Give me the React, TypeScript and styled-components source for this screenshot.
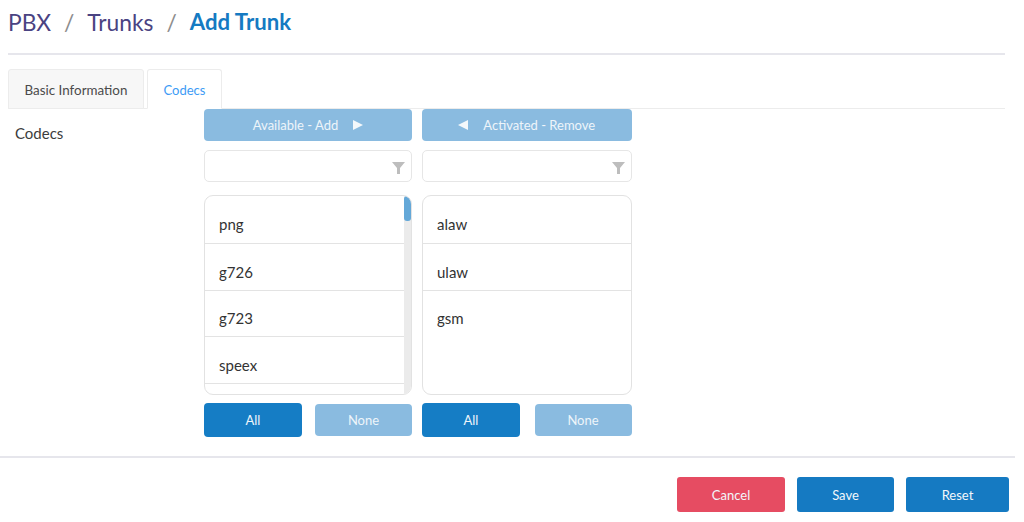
import React from "react";
import styled, { createGlobalStyle } from "styled-components";

const Global = createGlobalStyle`
  html, body { margin: 0; padding: 0; background: #fff; }
  body { font-family: "Lato", "Liberation Sans", sans-serif; width: 1024px; height: 522px; overflow: hidden; }
`;
const Page = styled.div`width: 1015px; display: flex; flex-direction: column;`;
const Header = styled.header`
  margin: 0 10px 0 8px; height: 46px; padding-top: 7px;
  border-bottom: 2px solid #e6e6ec; display: flex; align-items: flex-start;
`;
const Crumbs = styled.div`display: flex; font-size: 22.8px; line-height: 30px; color: #4a4382;`;
const Sep = styled.span`color: #8d8d8d; margin: 0 13px;`;
const Current = styled.span`color: #157ac2; font-weight: 700; font-size: 22.2px;`;
const Tabs = styled.nav`
  margin: 14px 10px 0 8px; height: 39px; display: flex; gap: 3px; border-bottom: 1px solid #ececec;
`;
const Tab = styled.div<{ $active?: boolean }>`
  box-sizing: border-box; height: 40px; padding-top: 1px; display: flex; align-items: center; justify-content: center;
  width: ${(p) => (p.$active ? "75px" : "136px")};
  font-size: ${(p) => (p.$active ? "13px" : "13.4px")}; color: ${(p) => (p.$active ? "#3d9bf5" : "#4b4b4b")};
  background: ${(p) => (p.$active ? "#fff" : "#f7f7f7")};
  border: 1px solid #ececec; border-bottom-color: ${(p) => (p.$active ? "#fff" : "#ececec")};
  border-radius: 3px 3px 0 0;
`;
const Content = styled.main`display: flex; height: 347px; margin-left: 15px;`;
const Label = styled.div`width: 189px; padding-top: 14px; font-size: 15px; line-height: 20px; color: #3c3c3c;`;
const Column = styled.section<{ $wide?: boolean }>`
  width: ${(p) => (p.$wide ? "209.5px" : "208px")}; margin-right: 10px; display: flex; flex-direction: column;
`;
const Action = styled.button`
  height: 32px; width: 100%; border: 0; border-radius: 4px; background: #8abbe0; color: #eef5fa;
  font: 13px "Lato", sans-serif; display: flex; align-items: center; justify-content: center; gap: 15px; padding: 0;
`;
const Filter = styled.div`
  margin-top: 9px; height: 32px; box-sizing: border-box; border: 1px solid #e6e6e6; border-radius: 5px;
  display: flex; align-items: center; justify-content: flex-end; padding: 3px 6px 0 0;
`;
const List = styled.div`
  margin-top: 13px; height: 200px; box-sizing: border-box; border: 1px solid #e2e2e2; border-radius: 9px;
  overflow: hidden; position: relative;
`;
const Row = styled.div<{ $last?: boolean }>`
  height: 47px; box-sizing: border-box; padding: 17.5px 0 0 14px; font-size: 15px; line-height: 20px; color: #333;
  border-bottom: ${(p) => (p.$last ? "0" : "1px solid #e3e3e3")};
  &:first-child { height: 48px; padding-top: 18px; }
  &:nth-child(3) { height: 46px; padding-top: 17px; }
`;
const Track = styled.div`
  position: absolute; top: 0; right: 0; bottom: 0; width: 7px; background: #ebebeb;
`;
const Thumb = styled.div`width: 7px; height: 25px; border-radius: 3px; background: #64a8d8;`;
const Pair = styled.div`margin-top: 8px; display: flex; justify-content: space-between; align-items: center;`;
const Small = styled.button<{ $on?: boolean }>`
  box-sizing: border-box; padding: 0; border: 0; border-radius: 4px; color: #eef5fa; font: 13px "Lato", sans-serif;
  width: ${(p) => (p.$on ? "98px" : "97px")}; height: ${(p) => (p.$on ? "34px" : "32px")};
  background: ${(p) => (p.$on ? "#157dc5" : "#8abbe0")};
`;
const Footer = styled.footer`
  border-top: 2px solid #e6e6ec; box-sizing: border-box; height: 66px; padding: 19px 6px 0 0;
  display: flex; justify-content: flex-end; gap: 12px;
`;
const FootBtn = styled.button<{ $w: number; $danger?: boolean }>`
  width: ${(p) => p.$w}px; height: 35px; border: 0; border-radius: 3px; padding: 0; color: #f2f7fb;
  font: 13px "Lato", sans-serif; background: ${(p) => (p.$danger ? "#e64c62" : "#157ac2")};
`;

const FilterIcon = () => (
  <svg width="13" height="12" viewBox="0 0 13 12"><path d="M0 0h13L8 6v6H5V6z" fill="#bdbdbd" /></svg>
);
const Tri = ({ left }: { left?: boolean }) => (
  <svg width="10" height="10" viewBox="0 0 10 10">
    <path d={left ? "M10 0v10L0 5z" : "M0 0v10l10-5z"} fill="#f4f8fb" />
  </svg>
);

export default function App() {
  return (
    <Page>
      <Global />
      <Header>
        <Crumbs>PBX<Sep>/</Sep>Trunks<Sep>/</Sep><Current>Add Trunk</Current></Crumbs>
      </Header>
      <Tabs>
        <Tab>Basic Information</Tab>
        <Tab $active>Codecs</Tab>
      </Tabs>
      <Content>
        <Label>Codecs</Label>
        <Column>
          <Action>Available - Add <Tri /></Action>
          <Filter><FilterIcon /></Filter>
          <List>
            <Row>png</Row><Row>g726</Row><Row>g723</Row><Row>speex</Row>
            <Track><Thumb /></Track>
          </List>
          <Pair><Small $on>All</Small><Small>None</Small></Pair>
        </Column>
        <Column $wide>
          <Action><Tri left /> Activated - Remove</Action>
          <Filter><FilterIcon /></Filter>
          <List>
            <Row>alaw</Row><Row>ulaw</Row><Row $last>gsm</Row>
          </List>
          <Pair><Small $on>All</Small><Small>None</Small></Pair>
        </Column>
      </Content>
      <Footer>
        <FootBtn $w={108} $danger>Cancel</FootBtn>
        <FootBtn $w={97}>Save</FootBtn>
        <FootBtn $w={103}>Reset</FootBtn>
      </Footer>
    </Page>
  );
}
